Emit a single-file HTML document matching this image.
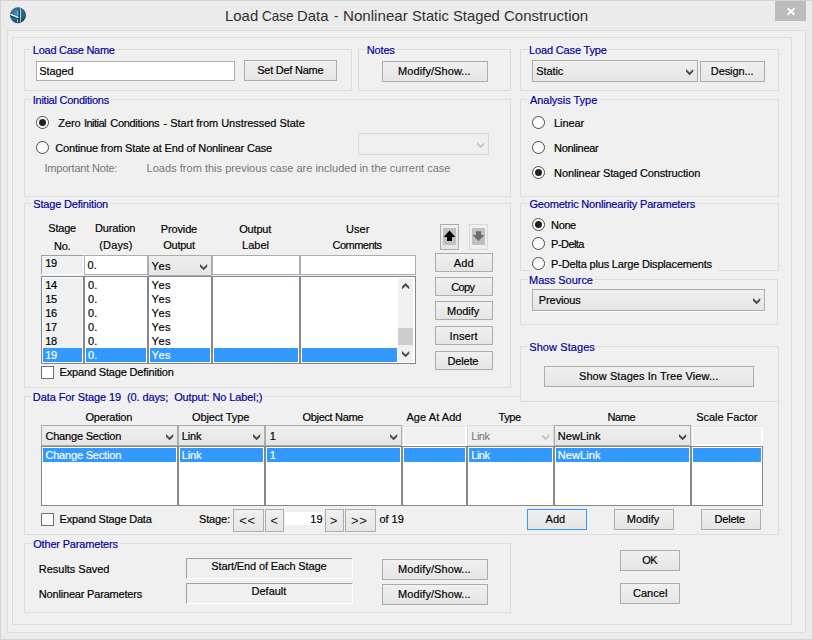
<!DOCTYPE html>
<html lang="en">
<head>
<meta charset="utf-8">
<title>Load Case Data - Nonlinear Static Staged Construction</title>
<style>
*{box-sizing:border-box;margin:0;padding:0}
html,body{width:813px;height:640px;overflow:hidden}
body{background:#ebebeb;font-family:"Liberation Sans",Arial,sans-serif;font-size:11px;color:#000;position:relative}
#win{position:absolute;left:0;top:0;width:813px;height:640px;box-shadow:inset 0 0 0 1px #d4d4d4}
#win>*{position:absolute}
.abs{position:absolute}
.pan{border:1px solid #dcdcdc;background:#f0f0f0}
.t{line-height:13px;height:13px;white-space:pre;-webkit-text-stroke:0.18px}
.title{font-size:15px;line-height:18px;height:18px;color:#303030;-webkit-text-stroke:0}
.close{background:#bcbcbc}
.grp{border:1px solid #dcdcdc}
.cover{background:#f0f0f0}
.gl{color:#00009c}
.dim{color:#767676;-webkit-text-stroke:0}
.w{color:#fff}
.btn{border:1px solid #acacac;background:linear-gradient(#f0f0f0,#e5e5e5)}
.btn.def{border-color:#3399ff}
.btn.disb{border-color:#d9d9d9;background:#efefef}
.cmb{border:1px solid #acacac;background:linear-gradient(#efefef,#e5e5e5)}
.cmb.dis{border-color:#d9d9d9;background:#efefef}
.cmb .chev{position:absolute;right:4px;top:50%;margin-top:-2px}
.txt{border:1px solid #abadb3;background:#fff}
.white{background:#fff}
.sunk{border:1px solid;border-color:#a0a0a0 #fff #fff #a0a0a0;background:#f0f0f0}
.lst{border:1px solid #828790;background:#fff}
.lst.grey{background:#f0f0f0;box-shadow:inset 0 0 0 1px #fff}
.sel{background:#3399ff}
.sb{background:#f0f0f0}
.rad{width:13px;height:13px;border-radius:50%;border:1px solid #4a4a4a;background:#fff}
.rad i{position:absolute;left:2px;top:2px;width:7px;height:7px;border-radius:50%;background:#212121;display:block}
.chk{border:1px solid #707070;background:#fff}
.t13{font-size:13px;line-height:16px;height:16px;-webkit-text-stroke:0;color:#1a1a1a}
.t15{font-size:15px}
</style>
</head>
<body>
<div id="win">
<div class="pan" style="left:7px;top:30px;width:799px;height:603px;"></div>
<div class="pan" style="left:12px;top:37px;width:780px;height:588px;"></div>
<div class="t title" style="left:224.68px;top:7px;transform:scaleX(0.9943);transform-origin:0 0;">Load</div>
<div class="t title" style="left:261.61px;top:7px;transform:scaleX(0.9017);transform-origin:0 0;">Case</div>
<div class="t title" style="left:296.78px;top:7px;transform:scaleX(0.9916);transform-origin:0 0;">Data</div>
<div class="t title" style="left:334.32px;top:7px;transform:scaleX(0.8726);transform-origin:0 0;">-</div>
<div class="t title" style="left:342.96px;top:7px;transform:scaleX(1.0089);transform-origin:0 0;">Nonlinear</div>
<div class="t title" style="left:412.13px;top:7px;transform:scaleX(0.9797);transform-origin:0 0;">Static</div>
<div class="t title" style="left:453.23px;top:7px;transform:scaleX(0.9848);transform-origin:0 0;">Staged</div>
<div class="t title" style="left:503.84px;top:7px;transform:scaleX(0.9990);transform-origin:0 0;">Construction</div>
<div class="close" style="left:775px;top:1px;width:31px;height:20px;"><svg width="31" height="20" viewBox="0 0 31 20"><path d="M12.6 7.3 L19.4 13.7 M19.4 7.3 L12.6 13.7" stroke="#fff" stroke-width="1.9" fill="none"/></svg></div>
<svg class="abs" style="left:9px;top:6px" width="18" height="19" viewBox="0 0 18 19">
<defs><radialGradient id="g" cx="0.42" cy="0.36" r="0.7"><stop offset="0" stop-color="#3f8fb8"/><stop offset="0.65" stop-color="#23678c"/><stop offset="0.92" stop-color="#123f59"/><stop offset="1" stop-color="#2a4a5c"/></radialGradient></defs>
<circle cx="9" cy="9.3" r="7.7" fill="url(#g)" stroke="#0b2c40" stroke-opacity="0.6" stroke-width="0.7"/>
<path d="M1.4 9.6 L12.6 14.2" stroke="#0d2c3e" stroke-width="1" fill="none"/>
<path d="M10.3 3 L10.3 16.6" stroke="#10293a" stroke-width="1.1" fill="none"/>
<path d="M11.4 2.2 L11.4 16.8" stroke="#d6e8f1" stroke-width="0.9" fill="none"/>
<path d="M8.6 9.6 L8.6 5.6 Q8.6 4.8 9.6 4.7" stroke="#9db3c0" stroke-width="0.9" fill="none"/>
<path d="M1.6 8.4 L9.3 11.7" stroke="#fff" stroke-width="1.3" fill="none"/>
<path d="M8.6 13.6 L8.6 16.4" stroke="#cfe3ee" stroke-width="0.9" fill="none"/>
</svg>
<div class="grp" style="left:24px;top:49px;width:328px;height:42px;"></div>
<div class="cover" style="left:31px;top:49px;width:85px;height:1px;"></div>
<div class="t gl" style="left:32.85px;top:44px;letter-spacing:-0.27px;">Load Case Name</div>
<div class="txt" style="left:36px;top:61px;width:199px;height:20px;"></div>
<div class="t" style="left:39.3px;top:65px;letter-spacing:-0.11px;">Staged</div>
<div class="btn" style="left:244px;top:60px;width:93px;height:21px;"></div>
<div class="t" style="left:257.3px;top:64px;letter-spacing:-0.26px;">Set Def Name</div>
<div class="grp" style="left:358px;top:49px;width:153px;height:42px;"></div>
<div class="cover" style="left:365px;top:49px;width:31px;height:1px;"></div>
<div class="t gl" style="left:366.85px;top:44px;letter-spacing:-0.18px;">Notes</div>
<div class="btn" style="left:382px;top:61px;width:106px;height:21px;"></div>
<div class="t" style="left:398.1px;top:65px;letter-spacing:0.08px;">Modify/Show...</div>
<div class="grp" style="left:520px;top:49px;width:259px;height:42px;"></div>
<div class="cover" style="left:528px;top:49px;width:80px;height:1px;"></div>
<div class="t gl" style="left:529.1px;top:44px;letter-spacing:-0.16px;">Load Case Type</div>
<div class="cmb" style="left:532px;top:60px;width:166px;height:22px;"><svg class="abs" style="left:153px;top:8px" width="8" height="7" viewBox="0 0 8 7"><path d="M0 0 L3.6 3.4 L7.2 0 L7.2 2.7 L3.6 6.3 L0 2.7 Z" fill="#4a4a4a"/></svg></div>
<div class="t" style="left:536.25px;top:65px;letter-spacing:-0.1px;">Static</div>
<div class="btn" style="left:700px;top:61px;width:65px;height:21px;"></div>
<div class="t" style="left:710.85px;top:65px;letter-spacing:-0.1px;">Design...</div>
<div class="grp" style="left:24px;top:99px;width:487px;height:98px;"></div>
<div class="cover" style="left:31px;top:99px;width:80px;height:1px;"></div>
<div class="t gl" style="left:32.73px;top:94px;letter-spacing:-0.25px;">Initial Conditions</div>
<div class="rad" style="left:36px;top:116px;"><i></i></div>
<div class="t" style="left:58.35px;top:117px;letter-spacing:-0.14px;">Zero</div>
<div class="t" style="left:83.98px;top:117px;letter-spacing:-0.54px;">Initial</div>
<div class="t" style="left:110.24px;top:117px;letter-spacing:-0.29px;">Conditions</div>
<div class="t" style="left:163.51px;top:117px;">-</div>
<div class="t" style="left:170.3px;top:117px;letter-spacing:-0.04px;">Start from Unstressed State</div>
<div class="rad" style="left:36px;top:141px;"></div>
<div class="t" style="left:55.19px;top:142px;letter-spacing:-0.16px;">Continue from State at End of Nonlinear Case</div>
<div class="cmb dis" style="left:358px;top:133px;width:131px;height:22px;"><svg class="abs" style="left:118px;top:8px" width="8" height="7" viewBox="0 0 8 7"><path d="M0 0 L3.6 3.4 L7.2 0 L7.2 2.7 L3.6 6.3 L0 2.7 Z" fill="#c6c6c6"/></svg></div>
<div class="t dim" style="left:44.48px;top:162px;letter-spacing:-0.2px;">Important Note:</div>
<div class="t dim" style="left:146.6px;top:162px;letter-spacing:0.02px;">Loads from this previous case are included in the current case</div>
<div class="grp" style="left:520px;top:99px;width:259px;height:98px;"></div>
<div class="cover" style="left:528px;top:99px;width:71px;height:1px;"></div>
<div class="t gl" style="left:529.98px;top:94px;letter-spacing:-0.03px;">Analysis Type</div>
<div class="rad" style="left:532px;top:116px;"></div>
<div class="t" style="left:554.1px;top:117px;letter-spacing:-0.1px;">Linear</div>
<div class="rad" style="left:532px;top:141px;"></div>
<div class="t" style="left:554.1px;top:142px;letter-spacing:-0.31px;">Nonlinear</div>
<div class="rad" style="left:532px;top:166px;"><i></i></div>
<div class="t" style="left:554.1px;top:167px;letter-spacing:-0.13px;">Nonlinear Staged Construction</div>
<div class="grp" style="left:24px;top:203px;width:487px;height:185px;"></div>
<div class="cover" style="left:31px;top:203px;width:79px;height:1px;"></div>
<div class="t gl" style="left:33.25px;top:198px;letter-spacing:-0.18px;">Stage Definition</div>
<div class="t" style="left:48.25px;top:222px;letter-spacing:-0.19px;">Stage</div>
<div class="t" style="left:54.1px;top:240px;letter-spacing:-0.36px;">No.</div>
<div class="t" style="left:95.1px;top:222px;letter-spacing:-0.17px;">Duration</div>
<div class="t" style="left:99.32px;top:239px;letter-spacing:0.14px;">(Days)</div>
<div class="t" style="left:160.85px;top:223px;letter-spacing:-0.15px;">Provide</div>
<div class="t" style="left:163.23px;top:239px;letter-spacing:-0.24px;">Output</div>
<div class="t" style="left:239.23px;top:223px;letter-spacing:-0.19px;">Output</div>
<div class="t" style="left:242.1px;top:239px;letter-spacing:-0.01px;">Label</div>
<div class="t" style="left:345.9px;top:223px;letter-spacing:0.1px;">User</div>
<div class="t" style="left:332.44px;top:239px;letter-spacing:-0.5px;">Comments</div>
<div class="sunk" style="left:41px;top:255px;width:43px;height:20px;"></div>
<div class="t" style="left:45.36px;top:257px;letter-spacing:-0.59px;">19</div>
<div class="txt" style="left:84px;top:255px;width:64px;height:20px;"></div>
<div class="t" style="left:87.57px;top:259px;letter-spacing:0.05px;">0.</div>
<div class="cmb" style="left:148px;top:255px;width:64px;height:21px;"><svg class="abs" style="left:51px;top:8px" width="8" height="7" viewBox="0 0 8 7"><path d="M0 0 L3.6 3.4 L7.2 0 L7.2 2.7 L3.6 6.3 L0 2.7 Z" fill="#4a4a4a"/></svg></div>
<div class="t" style="left:151.56px;top:260px;letter-spacing:0.54px;">Yes</div>
<div class="txt" style="left:212px;top:255px;width:88px;height:20px;"></div>
<div class="txt" style="left:300px;top:255px;width:116px;height:20px;"></div>
<div class="lst grey" style="left:41px;top:276px;width:43px;height:88px;"></div>
<div class="sel" style="left:43px;top:348px;width:39px;height:14px;"></div>
<div class="lst" style="left:84px;top:276px;width:64px;height:88px;"></div>
<div class="sel" style="left:86px;top:348px;width:60px;height:14px;"></div>
<div class="lst" style="left:148px;top:276px;width:64px;height:88px;"></div>
<div class="sel" style="left:150px;top:348px;width:60px;height:14px;"></div>
<div class="lst" style="left:212px;top:276px;width:88px;height:88px;"></div>
<div class="sel" style="left:214px;top:348px;width:84px;height:14px;"></div>
<div class="lst" style="left:300px;top:276px;width:116px;height:88px;"></div>
<div class="sel" style="left:302px;top:348px;width:95px;height:14px;"></div>
<div class="t" style="left:45.36px;top:279px;letter-spacing:-0.6px;">14</div>
<div class="t" style="left:88.07px;top:279px;letter-spacing:-0.05px;">0.</div>
<div class="t" style="left:151.56px;top:279px;letter-spacing:0.54px;">Yes</div>
<div class="t" style="left:45.36px;top:293px;letter-spacing:-0.6px;">15</div>
<div class="t" style="left:88.07px;top:293px;letter-spacing:-0.05px;">0.</div>
<div class="t" style="left:151.56px;top:293px;letter-spacing:0.54px;">Yes</div>
<div class="t" style="left:45.36px;top:307px;letter-spacing:-0.6px;">16</div>
<div class="t" style="left:88.07px;top:307px;letter-spacing:-0.05px;">0.</div>
<div class="t" style="left:151.56px;top:307px;letter-spacing:0.54px;">Yes</div>
<div class="t" style="left:45.36px;top:321px;letter-spacing:-0.56px;">17</div>
<div class="t" style="left:88.07px;top:321px;letter-spacing:-0.05px;">0.</div>
<div class="t" style="left:151.56px;top:321px;letter-spacing:0.54px;">Yes</div>
<div class="t" style="left:45.36px;top:335px;letter-spacing:-0.6px;">18</div>
<div class="t" style="left:88.07px;top:335px;letter-spacing:-0.05px;">0.</div>
<div class="t" style="left:151.56px;top:335px;letter-spacing:0.54px;">Yes</div>
<div class="t w" style="left:45.36px;top:349px;letter-spacing:-0.59px;">19</div>
<div class="t w" style="left:88.07px;top:349px;letter-spacing:-0.05px;">0.</div>
<div class="t w" style="left:151.56px;top:349px;letter-spacing:0.54px;">Yes</div>
<div class="sb" style="left:398px;top:278px;width:15px;height:84px;">
<svg class="abs" style="left:4px;top:5px" width="8" height="7" viewBox="0 0 8 7"><path d="M0 6.3 L3.6 2.9 L7.2 6.3 L7.2 3.6 L3.6 0 L0 3.6 Z" fill="#4a4a4a"/></svg>
<div class="abs" style="left:0;top:50px;width:15px;height:17px;background:#cdcdcd"></div>
<svg class="abs" style="left:4px;top:73px" width="8" height="7" viewBox="0 0 8 7"><path d="M0 0 L3.6 3.4 L7.2 0 L7.2 2.7 L3.6 6.3 L0 2.7 Z" fill="#4a4a4a"/></svg>
</div>
<div class="chk" style="left:41px;top:366px;width:13px;height:13px;"></div>
<div class="t" style="left:59.6px;top:366px;letter-spacing:-0.17px;">Expand Stage Definition</div>
<div class="btn" style="left:440px;top:224px;width:19px;height:26px;"></div>
<div class="abs" style="left:443px;top:228px;width:13px;height:17px;background:#c0c0c0"></div>
<svg class="abs" style="left:443px;top:228px" width="13" height="17" viewBox="0 0 13 17"><path d="M6.5 2.6 L12.3 9 L9 9 L9 12.9 L4 12.9 L4 9 L0.7 9 Z" fill="#000"/></svg>
<div class="btn disb" style="left:469px;top:224px;width:19px;height:26px;"></div>
<div class="abs" style="left:472px;top:228px;width:13px;height:17px;background:#c0c0c0"></div>
<svg class="abs" style="left:472px;top:228px" width="13" height="17" viewBox="0 0 13 17"><path d="M6.5 13.2 L12.3 7 L9 7 L9 3.2 L4 3.2 L4 7 L0.7 7 Z" fill="#6d6d6d"/></svg>
<div class="btn" style="left:435px;top:253px;width:58px;height:19px;"></div>
<div class="t" style="left:453.73px;top:257px;letter-spacing:0.2px;">Add</div>
<div class="btn" style="left:435px;top:277px;width:58px;height:19px;"></div>
<div class="t" style="left:451.19px;top:281px;letter-spacing:-0.6px;">Copy</div>
<div class="btn" style="left:435px;top:301px;width:58px;height:19px;"></div>
<div class="t" style="left:447.1px;top:305px;letter-spacing:-0.05px;">Modify</div>
<div class="btn" style="left:435px;top:326px;width:58px;height:19px;"></div>
<div class="t" style="left:449.48px;top:330px;letter-spacing:0.12px;">Insert</div>
<div class="btn" style="left:435px;top:351px;width:58px;height:19px;"></div>
<div class="t" style="left:447.6px;top:355px;letter-spacing:-0.18px;">Delete</div>
<div class="grp" style="left:520px;top:203px;width:259px;height:68px;"></div>
<div class="cover" style="left:528px;top:203px;width:169px;height:1px;"></div>
<div class="t gl" style="left:529.45px;top:198px;letter-spacing:-0.19px;">Geometric Nonlinearity Parameters</div>
<div class="cover" style="left:532px;top:256px;width:186px;height:16px;"></div>
<div class="rad" style="left:532px;top:218px;"><i></i></div>
<div class="t" style="left:551.1px;top:219px;letter-spacing:-0.39px;">None</div>
<div class="rad" style="left:532px;top:237px;"></div>
<div class="t" style="left:551.1px;top:238px;letter-spacing:-0.55px;">P-Delta</div>
<div class="rad" style="left:532px;top:257px;"></div>
<div class="t" style="left:551.1px;top:258px;letter-spacing:-0.17px;">P-Delta plus Large Displacements</div>
<div class="grp" style="left:520px;top:279px;width:258px;height:46px;"></div>
<div class="cover" style="left:528px;top:279px;width:66px;height:1px;"></div>
<div class="t gl" style="left:529.1px;top:274px;letter-spacing:-0.03px;">Mass Source</div>
<div class="white" style="left:532px;top:311px;width:233px;height:1px;"></div>
<div class="cmb" style="left:532px;top:289px;width:233px;height:22px;"><svg class="abs" style="left:220px;top:8px" width="8" height="7" viewBox="0 0 8 7"><path d="M0 0 L3.6 3.4 L7.2 0 L7.2 2.7 L3.6 6.3 L0 2.7 Z" fill="#4a4a4a"/></svg></div>
<div class="t" style="left:538.85px;top:294px;letter-spacing:-0.11px;">Previous</div>
<div class="grp" style="left:24px;top:396px;width:755px;height:139px;"></div>
<div class="cover" style="left:31px;top:396px;width:233px;height:1px;"></div>
<div class="t gl" style="left:32.85px;top:391px;letter-spacing:-0.1px;">Data For Stage 19  (0. days;  Output: No Label;)</div>
<div class="cover" style="left:520px;top:346px;width:259px;height:56px;"></div>
<div class="grp" style="left:520px;top:346px;width:259px;height:56px;"></div>
<div class="cover" style="left:527px;top:346px;width:69px;height:1px;"></div>
<div class="t gl" style="left:529.25px;top:341px;letter-spacing:0.08px;">Show Stages</div>
<div class="btn" style="left:544px;top:366px;width:210px;height:21px;"></div>
<div class="t" style="left:579px;top:370px;letter-spacing:0.07px;">Show Stages In Tree View...</div>
<div class="t" style="left:85.48px;top:411px;letter-spacing:-0.17px;">Operation</div>
<div class="t" style="left:191.98px;top:411px;letter-spacing:-0.12px;">Object Type</div>
<div class="t" style="left:302.48px;top:411px;letter-spacing:-0.32px;">Object Name</div>
<div class="t" style="left:406.48px;top:411px;letter-spacing:0.06px;">Age At Add</div>
<div class="t" style="left:498.5px;top:411px;letter-spacing:-0.37px;">Type</div>
<div class="t" style="left:607.6px;top:411px;letter-spacing:-0.48px;">Name</div>
<div class="t" style="left:696.25px;top:411px;letter-spacing:-0.05px;">Scale Factor</div>
<div class="cmb" style="left:41px;top:425px;width:137px;height:21px;"><svg class="abs" style="left:124px;top:8px" width="8" height="7" viewBox="0 0 8 7"><path d="M0 0 L3.6 3.4 L7.2 0 L7.2 2.7 L3.6 6.3 L0 2.7 Z" fill="#4a4a4a"/></svg></div>
<div class="t" style="left:45.44px;top:430px;letter-spacing:-0.19px;">Change Section</div>
<div class="cmb" style="left:178px;top:425px;width:87px;height:21px;"><svg class="abs" style="left:74px;top:8px" width="8" height="7" viewBox="0 0 8 7"><path d="M0 0 L3.6 3.4 L7.2 0 L7.2 2.7 L3.6 6.3 L0 2.7 Z" fill="#4a4a4a"/></svg></div>
<div class="t" style="left:181.85px;top:430px;letter-spacing:-0.18px;">Link</div>
<div class="cmb" style="left:265px;top:425px;width:137px;height:21px;"><svg class="abs" style="left:124px;top:8px" width="8" height="7" viewBox="0 0 8 7"><path d="M0 0 L3.6 3.4 L7.2 0 L7.2 2.7 L3.6 6.3 L0 2.7 Z" fill="#4a4a4a"/></svg></div>
<div class="t" style="left:269.66px;top:430px;">1</div>
<div class="sunk" style="left:402px;top:426px;width:65px;height:20px;border-color:#e0e0e0 #fff #fff #e0e0e0;box-shadow:inset 0 0 0 1px #fff;"></div>
<div class="cmb dis" style="left:467px;top:425px;width:87px;height:21px;"><svg class="abs" style="left:74px;top:8px" width="8" height="7" viewBox="0 0 8 7"><path d="M0 0 L3.6 3.4 L7.2 0 L7.2 2.7 L3.6 6.3 L0 2.7 Z" fill="#c6c6c6"/></svg></div>
<div class="t dim" style="left:471.35px;top:430px;letter-spacing:-0.52px;">Link</div>
<div class="cmb" style="left:554px;top:425px;width:137px;height:21px;"><svg class="abs" style="left:124px;top:8px" width="8" height="7" viewBox="0 0 8 7"><path d="M0 0 L3.6 3.4 L7.2 0 L7.2 2.7 L3.6 6.3 L0 2.7 Z" fill="#4a4a4a"/></svg></div>
<div class="t" style="left:557.85px;top:430px;letter-spacing:0.07px;">NewLink</div>
<div class="sunk" style="left:691px;top:426px;width:72px;height:20px;border-color:#e0e0e0 #fff #fff #e0e0e0;box-shadow:inset 0 0 0 1px #fff;"></div>
<div class="lst" style="left:41px;top:446px;width:137px;height:60px;"></div>
<div class="sel" style="left:43px;top:448px;width:133px;height:14px;"></div>
<div class="lst" style="left:178px;top:446px;width:87px;height:60px;"></div>
<div class="sel" style="left:180px;top:448px;width:83px;height:14px;"></div>
<div class="lst" style="left:265px;top:446px;width:137px;height:60px;"></div>
<div class="sel" style="left:267px;top:448px;width:133px;height:14px;"></div>
<div class="lst" style="left:402px;top:446px;width:65px;height:60px;"></div>
<div class="sel" style="left:404px;top:448px;width:61px;height:14px;"></div>
<div class="lst" style="left:467px;top:446px;width:87px;height:60px;"></div>
<div class="sel" style="left:469px;top:448px;width:83px;height:14px;"></div>
<div class="lst" style="left:554px;top:446px;width:137px;height:60px;"></div>
<div class="sel" style="left:556px;top:448px;width:133px;height:14px;"></div>
<div class="lst" style="left:691px;top:446px;width:72px;height:60px;"></div>
<div class="sel" style="left:693px;top:448px;width:68px;height:14px;"></div>
<div class="t w" style="left:45.44px;top:449px;letter-spacing:-0.19px;">Change Section</div>
<div class="t w" style="left:181.85px;top:449px;letter-spacing:-0.18px;">Link</div>
<div class="t w" style="left:269.66px;top:449px;">1</div>
<div class="t w" style="left:471.35px;top:449px;letter-spacing:-0.52px;">Link</div>
<div class="t w" style="left:557.85px;top:449px;letter-spacing:0.07px;">NewLink</div>
<div class="chk" style="left:41px;top:513px;width:13px;height:13px;"></div>
<div class="t" style="left:59.6px;top:513px;letter-spacing:-0.2px;">Expand Stage Data</div>
<div class="t" style="left:199px;top:513px;letter-spacing:-0.16px;">Stage:</div>
<div class="btn" style="left:233px;top:509px;width:31px;height:23px;"></div>
<div class="btn" style="left:265px;top:509px;width:19px;height:23px;"></div>
<div class="btn" style="left:325px;top:509px;width:19px;height:23px;"></div>
<div class="btn" style="left:345px;top:509px;width:31px;height:23px;"></div>
<div class="t t13" style="left:239.36px;top:513px;letter-spacing:0.6px;">&lt;&lt;</div>
<div class="t t13" style="left:270.61px;top:513px;">&lt;</div>
<div class="t t13" style="left:329.86px;top:513px;">&gt;</div>
<div class="t t13" style="left:351.11px;top:513px;letter-spacing:0.6px;">&gt;&gt;</div>
<div class="white" style="left:285px;top:512px;width:38px;height:13px;"></div>
<div class="t" style="left:310.16px;top:513px;letter-spacing:0.11px;">19</div>
<div class="t" style="left:379.54px;top:513px;letter-spacing:-0.06px;">of 19</div>
<div class="btn def" style="left:527px;top:509px;width:60px;height:21px;"></div>
<div class="t" style="left:545.48px;top:513px;letter-spacing:0.08px;">Add</div>
<div class="btn" style="left:614px;top:509px;width:60px;height:21px;"></div>
<div class="t" style="left:626.85px;top:513px;">Modify</div>
<div class="btn" style="left:701px;top:509px;width:60px;height:21px;"></div>
<div class="t" style="left:714.6px;top:513px;letter-spacing:-0.23px;">Delete</div>
<div class="grp" style="left:24px;top:543px;width:487px;height:70px;"></div>
<div class="cover" style="left:31px;top:543px;width:89px;height:1px;"></div>
<div class="t gl" style="left:33.23px;top:538px;letter-spacing:-0.18px;">Other Parameters</div>
<div class="t" style="left:38.85px;top:563px;letter-spacing:-0.03px;">Results Saved</div>
<div class="t" style="left:38.85px;top:588px;letter-spacing:-0.19px;">Nonlinear Parameters</div>
<div class="sunk" style="left:186px;top:558px;width:167px;height:21px;"></div>
<div class="sunk" style="left:186px;top:583px;width:167px;height:21px;"></div>
<div class="t" style="left:211.25px;top:560px;letter-spacing:-0.12px;">Start/End of Each Stage</div>
<div class="t" style="left:251.6px;top:585px;letter-spacing:-0.02px;">Default</div>
<div class="btn" style="left:382px;top:559px;width:106px;height:21px;"></div>
<div class="t" style="left:398.1px;top:563px;letter-spacing:0.08px;">Modify/Show...</div>
<div class="btn" style="left:382px;top:584px;width:106px;height:21px;"></div>
<div class="t" style="left:398.1px;top:588px;letter-spacing:0.08px;">Modify/Show...</div>
<div class="btn" style="left:620px;top:550px;width:60px;height:21px;"></div>
<div class="t" style="left:642.23px;top:554px;letter-spacing:-0.51px;">OK</div>
<div class="btn" style="left:620px;top:583px;width:60px;height:21px;"></div>
<div class="t" style="left:632.94px;top:587px;letter-spacing:0.06px;">Cancel</div>
</div>
</body>
</html>
